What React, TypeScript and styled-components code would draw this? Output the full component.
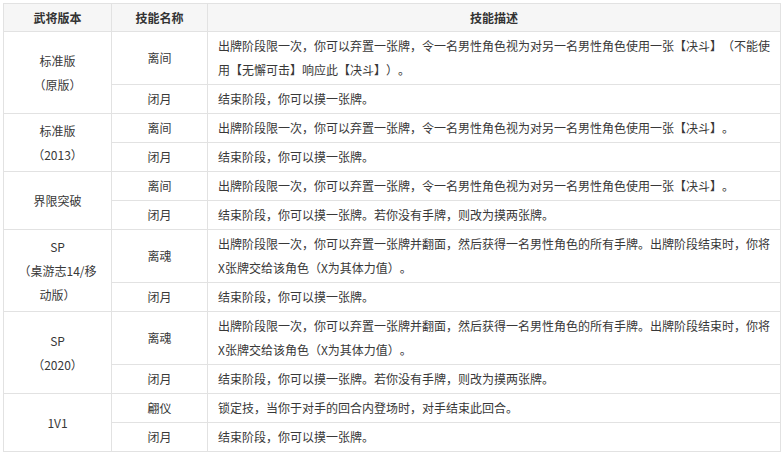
import React from 'react'
import styled, { createGlobalStyle } from 'styled-components'

interface Skill {
    name: string
    desc: string
    lines?: number
}

interface Version {
    label: string[]
    skills: Skill[]
}

const versions: Version[] = [
    {
        label: ['标准版', '（原版）'],
        skills: [
            {
                name: '离间',
                desc: '出牌阶段限一次，你可以弃置一张牌，令一名男性角色视为对另一名男性角色使用一张【决斗】（不能使用【无懈可击】响应此【决斗】）。',
                lines: 2,
            },
            { name: '闭月', desc: '结束阶段，你可以摸一张牌。' },
        ],
    },
    {
        label: ['标准版', '（2013）'],
        skills: [
            { name: '离间', desc: '出牌阶段限一次，你可以弃置一张牌，令一名男性角色视为对另一名男性角色使用一张【决斗】。' },
            { name: '闭月', desc: '结束阶段，你可以摸一张牌。' },
        ],
    },
    {
        label: ['界限突破'],
        skills: [
            { name: '离间', desc: '出牌阶段限一次，你可以弃置一张牌，令一名男性角色视为对另一名男性角色使用一张【决斗】。' },
            { name: '闭月', desc: '结束阶段，你可以摸一张牌。若你没有手牌，则改为摸两张牌。' },
        ],
    },
    {
        label: ['SP', '（桌游志14/移动版）'],
        skills: [
            {
                name: '离魂',
                desc: '出牌阶段限一次，你可以弃置一张牌并翻面，然后获得一名男性角色的所有手牌。出牌阶段结束时，你将X张牌交给该角色（X为其体力值）。',
                lines: 2,
            },
            { name: '闭月', desc: '结束阶段，你可以摸一张牌。' },
        ],
    },
    {
        label: ['SP', '（2020）'],
        skills: [
            {
                name: '离魂',
                desc: '出牌阶段限一次，你可以弃置一张牌并翻面，然后获得一名男性角色的所有手牌。出牌阶段结束时，你将X张牌交给该角色（X为其体力值）。',
                lines: 2,
            },
            { name: '闭月', desc: '结束阶段，你可以摸一张牌。若你没有手牌，则改为摸两张牌。' },
        ],
    },
    {
        label: ['1V1'],
        skills: [
            { name: '翩仪', desc: '锁定技，当你于对手的回合内登场时，对手结束此回合。' },
            { name: '闭月', desc: '结束阶段，你可以摸一张牌。' },
        ],
    },
]

export default function App() {
    return (
        <>
            <GlobalStyle />
            <Page>
                <Table>
                    <colgroup>
                        <col style={{ width: 108 }} />
                        <col style={{ width: 96 }} />
                        <col />
                    </colgroup>
                    <thead>
                        <tr>
                            <HeadCell>武将版本</HeadCell>
                            <HeadCell>技能名称</HeadCell>
                            <HeadCell>技能描述</HeadCell>
                        </tr>
                    </thead>
                    <tbody>
                        {versions.map((v) =>
                            v.skills.map((s, i) => (
                                <Row key={v.label.join() + i} $lines={s.lines ?? 1}>
                                    {i === 0 && (
                                        <VersionCell rowSpan={v.skills.length}>
                                            {v.label.map((l) => (
                                                <div key={l}>{l}</div>
                                            ))}
                                        </VersionCell>
                                    )}
                                    <NameCell>{s.name}</NameCell>
                                    <DescCell>{s.desc}</DescCell>
                                </Row>
                            ))
                        )}
                    </tbody>
                </Table>
            </Page>
        </>
    )
}

const GlobalStyle = createGlobalStyle`
    body {
        margin: 0;
        background: #fff;
        font-family: "Noto Sans CJK SC", "Liberation Sans", sans-serif;
        color: #383838;
        text-spacing-trim: space-all;
    }
`

const Page = styled.div`
    padding: 3px 0 0 3px;
`

const Table = styled.table`
    width: 778px;
    table-layout: fixed;
    border-collapse: collapse;
    font-size: 12px;
    td, th {
        border: 1px solid #e2e2e2;
        line-height: 24px;
        vertical-align: middle;
        text-spacing-trim: space-all;
    }
`

const HeadCell = styled.th`
    height: 27px;
    padding: 0 8px;
    background: #f6f6f6;
    font-weight: bold;
    color: #333;
    text-align: center;
`

const Row = styled.tr<{ $lines: number }>`
    height: ${(p) => 5 + p.$lines * 24}px;
`

const VersionCell = styled.td`
    padding: 0 12px;
    text-align: center;
`

const NameCell = styled.td`
    padding: 0 8px;
    text-align: center;
`

const DescCell = styled.td`
    padding: 2px 8px 2px 10px;
    text-align: left;
`
